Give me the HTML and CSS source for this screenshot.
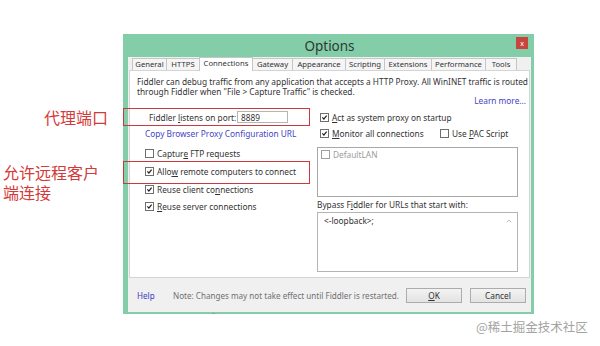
FILE: index.html
```html
<!DOCTYPE html>
<html lang="en">
  <head>
    <meta charset="utf-8" />
    <meta name="viewport" content="width=device-width, initial-scale=1.0" />
    <title>Options</title>
    <!-- Stylesheet -->
    <link rel="stylesheet" href="styles.css">
  </head>
  <body>
    <div class="stage">
      <div class="window">
        <div class="titlebar">
          <span></span>
          <h1 class="title">Options</h1>
          <button class="close">x</button>
        </div>
        <div class="inner">
          <div class="tabs">
            <div class="tab tab-general">General</div>
            <div class="tab tab-https">HTTPS</div>
            <div class="tab tab-connections active">Connections</div>
            <div class="tab tab-gateway">Gateway</div>
            <div class="tab tab-appearance">Appearance</div>
            <div class="tab tab-scripting">Scripting</div>
            <div class="tab tab-extensions">Extensions</div>
            <div class="tab tab-performance">Performance</div>
            <div class="tab tab-tools">Tools</div>
          </div>
          <div class="panel">
            <p class="desc">Fiddler can debug traffic from any application that accepts a HTTP Proxy. All WinINET traffic is routed<br />through Fiddler when "File &gt; Capture Traffic" is checked.</p>
            <div class="learn"><a>Learn more...</a></div>
            <div class="cols">
              <div class="col-left">
                <div class="port-row">
                  <label>Fiddler <u>l</u>istens on port:</label>
                  <input type="text" value="8889" readonly />
                </div>
                <div class="copy-row"><a>Copy Browser Proxy Configuration URL</a></div>
                <div class="checks">
                  <div class="check-row"><span class="cb"></span><span>Captur<u>e</u> FTP requests</span></div>
                  <div class="check-row"><span class="cb"><svg viewBox="0 0 9 9"><path d="M1.8 4.4 L3.7 6.5 L7.2 2.2" /></svg></span><span>Allo<u>w</u> remote computers to connect</span></div>
                  <div class="check-row"><span class="cb"><svg viewBox="0 0 9 9"><path d="M1.8 4.4 L3.7 6.5 L7.2 2.2" /></svg></span><span>Reuse client co<u>n</u>nections</span></div>
                  <div class="check-row"><span class="cb"><svg viewBox="0 0 9 9"><path d="M1.8 4.4 L3.7 6.5 L7.2 2.2" /></svg></span><span><u>R</u>euse server connections</span></div>
                </div>
              </div>
              <div class="col-right">
                <div class="opt-row">
                  <span class="opt"><span class="cb"><svg viewBox="0 0 9 9"><path d="M1.8 4.4 L3.7 6.5 L7.2 2.2" /></svg></span><span><u>A</u>ct as system proxy on startup</span></span>
                </div>
                <div class="opt-row">
                  <span class="opt opt-monitor"><span class="cb"><svg viewBox="0 0 9 9"><path d="M1.8 4.4 L3.7 6.5 L7.2 2.2" /></svg></span><span><u>M</u>onitor all connections</span></span>
                  <span class="opt"><span class="cb"></span><span>Use <u>P</u>AC Script</span></span>
                </div>
                <div class="lan-box">
                  <div class="lan-row"><span class="cb cb-dim"></span><span>DefaultLAN</span></div>
                </div>
                <div class="bypass"><span>Bypass F<u>i</u>ddler for URLs that start with:</span></div>
                <div class="bypass-field">
                  <span>&lt;-loopback&gt;;</span>
                  <svg class="scroll-up" viewBox="0 0 6 4"><path d="M0.8 3.3 L3 1 L5.2 3.3" /></svg>
                </div>
              </div>
            </div>
          </div>
          <div class="footer">
            <a class="help">Help</a>
            <span class="note">Note: Changes may not take effect until Fiddler is restarted.</span>
            <div class="buttons">
              <button><u>O</u>K</button>
              <button>Cancel</button>
            </div>
          </div>
        </div>
      </div>
    </div>

    <!-- annotations -->
    <div class="mark mark-port"></div>
    <div class="mark mark-remote"></div>
    <div class="mark-label label-port">代理端口</div>
    <div class="mark-label label-remote">允许远程客户端连接</div>
    <div class="tick"></div>
    <div class="watermark">@稀土掘金技术社区</div>
  </body>
</html>
```
FILE: styles.css
```css
* {
  padding: 0;
  margin: 0;
  box-sizing: border-box;
  font-family: "Noto Sans", "Liberation Sans", sans-serif;
}
body {
  width: 600px;
  height: 346px;
  background-color: #ffffff;
  color: #333333;
  position: relative;
  overflow: hidden;
}
u {
  text-decoration-thickness: 1px;
  text-underline-offset: 1px;
}
.stage {
  padding: 34px 0 0 123px;
}
.window {
  width: 411px;
  height: 280px;
  background-color: #84cda9;
  padding: 0 3px 2px 5px;
  display: flex;
  flex-direction: column;
}
.titlebar {
  height: 23px;
  display: grid;
  grid-template-columns: 1fr auto 1fr;
  align-items: center;
}
.title {
  font-size: 13.5px;
  font-weight: 400;
  color: #2c3a33;
}
.close {
  justify-self: end;
  align-self: start;
  margin: 3px 3px 0 0;
  width: 12px;
  height: 12px;
  border: none;
  background-color: #c8453e;
  color: #ffffff;
  font-size: 7px;
  line-height: 11px;
}
.inner {
  flex: 1;
  background-color: #f0f0f0;
  display: flex;
  flex-direction: column;
}
.tabs {
  height: 13px;
  display: flex;
  align-items: flex-end;
  padding-left: 4px;
}
.tab {
  height: 12px;
  border: 1px solid #c6c6c6;
  border-bottom: none;
  margin-right: -1px;
  background-color: #f5f5f5;
  font-size: 7.7px;
  line-height: 11px;
  text-align: center;
  white-space: nowrap;
}
.tab.active {
  height: 14px;
  margin-bottom: -1px;
  background-color: #ffffff;
  position: relative;
  z-index: 1;
}
.tab-general { width: 35px; }
.tab-https { width: 34px; }
.tab-connections { width: 54px; }
.tab-gateway { width: 41px; }
.tab-appearance { width: 54px; }
.tab-scripting { width: 40px; }
.tab-extensions { width: 48px; }
.tab-performance { width: 55px; }
.tab-tools { width: 32px; }
.panel {
  margin: 0 1px;
  height: 208px;
  background-color: #ffffff;
  border: 1px solid #d4d4d4;
  padding: 6px 3px 0 7px;
  font-size: 8.3px;
}
.desc {
  line-height: 9.5px;
  white-space: nowrap;
}
.learn {
  text-align: right;
  line-height: 10px;
  color: #4343c4;
}
.cols {
  display: flex;
  margin-top: 3px;
}
.col-left {
  width: 180px;
}
.port-row {
  height: 16px;
  display: flex;
  align-items: center;
  padding-left: 12px;
  gap: 2px;
}
.port-row label {
  width: 86px;
  white-space: nowrap;
}
.port-row input {
  width: 51px;
  height: 12px;
  border: 1px solid #b4b4b4;
  padding-left: 3px;
  font-size: 8.3px;
  color: #333333;
  outline: none;
}
.copy-row {
  height: 16px;
  display: flex;
  align-items: center;
  padding-left: 8px;
  color: #4545c6;
  white-space: nowrap;
}
.checks {
  margin-top: 4px;
}
.check-row {
  height: 17.7px;
  display: flex;
  align-items: center;
  gap: 3px;
  padding-left: 8px;
  white-space: nowrap;
}
.cb {
  width: 9px;
  height: 9px;
  border: 1px solid #6e6e6e;
  background-color: #ffffff;
  display: inline-flex;
  flex-shrink: 0;
}
.cb svg {
  width: 7px;
  height: 7px;
  fill: none;
  stroke: #1e1e1e;
  stroke-width: 1.6;
}
.cb-dim {
  border-color: #a0a0a0;
}
.col-right {
  width: 201px;
}
.opt-row {
  height: 16px;
  display: flex;
  align-items: center;
  padding-left: 3px;
}
.opt {
  display: flex;
  align-items: center;
  gap: 3px;
  white-space: nowrap;
}
.opt-monitor {
  width: 120px;
}
.lan-box {
  margin-top: 6px;
  height: 50px;
  border: 1px solid #a8a8a8;
  padding: 2px 3px;
}
.lan-row {
  height: 9px;
  display: flex;
  align-items: center;
  gap: 3px;
  color: #9c9c9c;
}
.bypass {
  height: 15px;
  display: flex;
  align-items: center;
  white-space: nowrap;
}
.bypass-field {
  height: 60px;
  border: 1px solid #b4b4b4;
  padding: 3px 5px 0 6px;
  display: flex;
  justify-content: space-between;
  align-items: flex-start;
  line-height: 9px;
}
.scroll-up {
  width: 6px;
  height: 4px;
  margin-top: 3px;
  fill: none;
  stroke: #bcbcbc;
  stroke-width: 1;
}
.footer {
  flex: 1;
  display: flex;
  align-items: center;
  padding: 0 5px 0 9px;
  font-size: 8.1px;
}
.help {
  width: 36px;
  color: #4040c0;
}
.note {
  color: #707070;
  white-space: nowrap;
}
.buttons {
  margin-left: auto;
  display: flex;
  gap: 8px;
}
.buttons button {
  width: 56px;
  height: 15px;
  border: 1px solid #acacac;
  background: linear-gradient(#f3f3f3, #e3e3e3);
  font-size: 8.3px;
  color: #333333;
}
.mark {
  position: absolute;
  left: 123px;
  width: 187px;
  border: 1px solid #c9393d;
}
.mark-port {
  top: 108px;
  height: 18px;
}
.mark-remote {
  top: 161px;
  height: 23px;
}
.mark-label {
  position: absolute;
  color: #d33a3a;
  font-family: "Noto Sans CJK SC", sans-serif;
  font-size: 16px;
  line-height: 20px;
}
.label-port {
  right: 492px;
  top: 107px;
}
.label-remote {
  left: 3px;
  top: 162px;
  width: 100px;
}
.tick {
  position: absolute;
  left: 212px;
  top: 313px;
  width: 3px;
  height: 1px;
  background-color: #9a9a9a;
}
.watermark {
  position: absolute;
  left: 476px;
  top: 318px;
  font-family: "Noto Sans CJK SC", sans-serif;
  font-size: 12.5px;
  line-height: 18px;
  color: #a3a3a3;
}
```
